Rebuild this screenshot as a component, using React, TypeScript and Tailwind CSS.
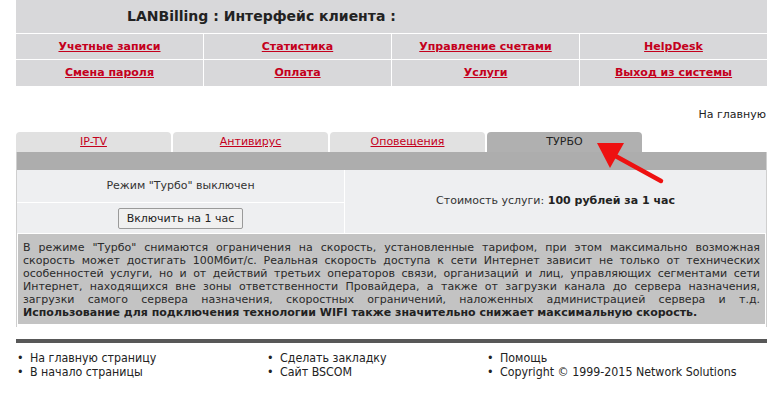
import React from "react";

const menu = [
  ["Учетные записи", "Статистика", "Управление счетами", "HelpDesk"],
  ["Смена пароля", "Оплата", "Услуги", "Выход из системы"],
];

const tabs = ["IP-TV", "Антивирус", "Оповещения"];

const descLines = [
  'В режиме "Турбо" снимаются ограничения на скорость, установленные тарифом, при этом максимально возможная',
  "скорость может достигать 100Мбит/с. Реальная скорость доступа к сети Интернет зависит не только от технических",
  "особенностей услуги, но и от действий третьих операторов связи, организаций и лиц, управляющих сегментами сети",
  "Интернет, находящихся вне зоны ответственности Провайдера, а также от загрузки канала до сервера назначения,",
  "загрузки самого сервера назначения, скоростных ограничений, наложенных администрацией сервера и т.д.",
];

function FooterItem({ children }: { children: React.ReactNode }) {
  return (
    <li className="flex">
      <span className="w-[14px] pl-[1px]">•</span>
      <span>{children}</span>
    </li>
  );
}

export default function App() {
  return (
    <div className="relative w-[781px] h-[398px] bg-white text-[#333] font-['DejaVu_Sans',Verdana,sans-serif] text-[11px] overflow-hidden">
      {/* Header */}
      <div className="ml-[16px] w-[751px] bg-[#d8d8da]">
        <div className="h-[33px] flex items-center pl-[111px] text-[14px] font-bold text-[#222]">
          LANBilling : Интерфейс клиента :
        </div>
        <div className="grid grid-cols-4 gap-px bg-white pt-px">
          {menu.map((row, ri) =>
            row.map((item) => (
              <div
                key={item}
                className={`bg-[#d8d8da] flex items-center justify-center ${ri === 0 ? "h-[25px] pt-[1px]" : "h-[26px] pt-[1px]"}`}
              >
                <a className="text-[#c4001c] font-bold underline text-[11px]">{item}</a>
              </div>
            ))
          )}
        </div>
      </div>

      {/* Home link */}
      <div className="mt-[22px] h-[14px] w-[766px] text-right text-[11px] text-[#222] leading-[14px]">
        На главную
      </div>

      {/* Tabs */}
      <div className="mt-[10px] ml-[16px] flex gap-[2px] h-[20px]">
        {tabs.map((t) => (
          <div
            key={t}
            className="w-[155px] h-[20px] rounded-t-[4px] bg-[#e1e1e1] flex items-center justify-center pt-[1px]"
          >
            <a className="text-[#c4001c] underline text-[11px]">{t}</a>
          </div>
        ))}
        <div className="w-[155px] h-[20px] rounded-t-[4px] bg-[#b0b0b0] flex items-center justify-center text-[11px] text-[#222] pt-[1px]">
          ТУРБО
        </div>
      </div>

      {/* Panel */}
      <div className="ml-[16px] w-[751px] border-x border-[#cfcfcf] h-[175px]">
        <div className="h-[18px] bg-[#adadad]" />
        <div className="flex">
          <div className="w-[327px] flex flex-col">
            <div className="h-[32px] bg-[#eeeff1] flex items-center justify-center text-[#333] pt-[1px]">
              Режим "Турбо" выключен
            </div>
            <div className="h-px bg-white" />
            <div className="h-[30px] bg-[#eeeff1] flex items-center justify-center">
              <button className="h-[21px] px-[8px] border border-[#9a9a9a] rounded-[2px] bg-[#f0f0f0] text-[11px] text-[#222] leading-none font-['DejaVu_Sans',sans-serif]">
                Включить на 1 час
              </button>
            </div>
          </div>
          <div className="w-px bg-white" />
          <div className="flex-1 bg-[#eeeff1] flex items-center justify-center text-[#333]">
            <span>
              Стоимость услуги: <b className="text-[#222]">100 рублей за 1 час</b>
            </span>
          </div>
        </div>
        <div className="mx-px mt-px h-[90px] bg-[#c3c3c3] px-[5px] pt-[7px] text-[11px] leading-[13px] text-[#2a2a2a]">
          {descLines.map((l) => (
            <div key={l} className="text-justify [text-align-last:justify]">
              {l}
            </div>
          ))}
          <div className="font-bold text-[#222]">
            Использование для подключения технологии WIFI также значительно снижает максимальную скорость.
          </div>
        </div>
      </div>

      {/* Footer line */}
      <div className="mt-[12px] ml-[16px] w-[751px] h-[4px] bg-[#585858]" />

      {/* Footer */}
      <div className="ml-[16px] mt-[8px] flex text-[12.3px] leading-[14px] text-[#222] font-['DejaVu_Sans_Condensed','DejaVu_Sans',sans-serif]">
        <ul className="w-[250px]">
          <FooterItem>На главную страницу</FooterItem>
          <FooterItem>В начало страницы</FooterItem>
        </ul>
        <ul className="w-[220px]">
          <FooterItem>Сделать закладку</FooterItem>
          <FooterItem>Сайт BSCOM</FooterItem>
        </ul>
        <ul>
          <FooterItem>Помощь</FooterItem>
          <FooterItem>Copyright © 1999-2015 Network Solutions</FooterItem>
        </ul>
      </div>

      {/* Arrow */}
      <svg className="absolute left-0 top-0 pointer-events-none" width="781" height="398">
        <line x1="661" y1="181" x2="610" y2="153" stroke="#ee1111" strokeWidth="4.5" strokeLinecap="round" />
        <polygon points="597,143 624,143 610,168" fill="#ee1111" />
      </svg>
    </div>
  );
}
